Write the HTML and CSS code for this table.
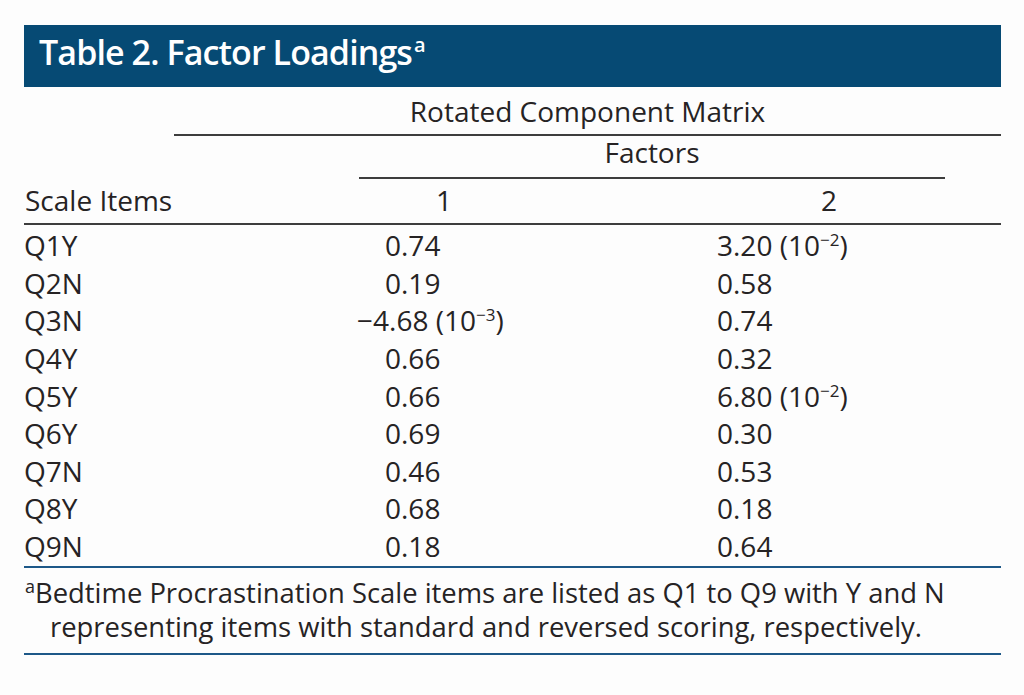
FILE: index.html
```html
<!DOCTYPE html>
<html lang="en">
<head>
<meta charset="utf-8">
<title>Table 2. Factor Loadings</title>
<link rel="stylesheet" href="styles.css">
</head>
<body>
<div class="table-wrap">
  <div class="title">Table 2. Factor Loadings<sup>a</sup></div>
  <div class="span-head rotated">Rotated Component Matrix</div>
  <div class="span-head factors">Factors</div>
  <div class="col-head">
    <div class="ch-label">Scale Items</div>
    <div class="ch-1">1</div>
    <div class="ch-2">2</div>
  </div>
  <div class="rows">
    <div class="lbl">Q1Y</div><div class="v1">0.74</div><div class="v2">3.20 (10<sup>−2</sup>)</div>
    <div class="lbl">Q2N</div><div class="v1">0.19</div><div class="v2">0.58</div>
    <div class="lbl">Q3N</div><div class="v1 hang">−4.68 (10<sup>−3</sup>)</div><div class="v2">0.74</div>
    <div class="lbl">Q4Y</div><div class="v1">0.66</div><div class="v2">0.32</div>
    <div class="lbl">Q5Y</div><div class="v1">0.66</div><div class="v2">6.80 (10<sup>−2</sup>)</div>
    <div class="lbl">Q6Y</div><div class="v1">0.69</div><div class="v2">0.30</div>
    <div class="lbl">Q7N</div><div class="v1">0.46</div><div class="v2">0.53</div>
    <div class="lbl">Q8Y</div><div class="v1">0.68</div><div class="v2">0.18</div>
    <div class="lbl">Q9N</div><div class="v1">0.18</div><div class="v2">0.64</div>
  </div>
  <div class="footnote"><sup>a</sup>Bedtime Procrastination Scale items are listed as Q1 to Q9 with Y and N representing items with standard and reversed scoring, respectively.</div>
</div>
</body>
</html>
```

FILE: styles.css
```css
html, body {
  margin: 0;
  padding: 0;
  background: #fdfdfd;
}

body {
  font-family: "Open Sans", "Noto Sans", "Liberation Sans", sans-serif;
  color: #262324;
  font-size: 28px;
}

.table-wrap {
  width: 977px;
  margin: 25px 0 0 24px;
}

.title {
  box-sizing: border-box;
  height: 62px;
  background: #064a74;
  color: #ffffff;
  font-weight: 600;
  font-size: 34px;
  letter-spacing: -0.9px;
  line-height: 40px;
  padding: 7px 0 0 15px;
}

.title sup {
  font-size: 20px;
  line-height: 0;
  vertical-align: 13px;
  margin-left: 2px;
  letter-spacing: 0;
}

.span-head {
  text-align: center;
  line-height: 30px;
  border-bottom: 2px solid #3d3d3d;
}

.rotated {
  margin-left: 150px;
  padding: 9px 0 8px;
}

.factors {
  margin: 0 56px 0 335px;
  padding: 1px 0 10px;
}

.col-head {
  display: grid;
  grid-template-columns: 335px 168px 1fr;
  line-height: 30px;
  padding: 6px 0 8px 1px;
  border-bottom: 2px solid #3d3d3d;
}

.ch-1 {
  text-align: center;
}

.ch-2 {
  text-align: right;
  padding-right: 164px;
}

.rows {
  display: grid;
  grid-template-columns: 361px 332px 1fr;
  grid-auto-rows: 24px;
  row-gap: 13.625px;
  line-height: 24px;
  padding: 8px 0 8px 0;
  border-bottom: 2px solid #1d5888;
}

.hang {
  margin-left: -28px;
}

.rows sup {
  font-size: 17px;
  line-height: 0;
  vertical-align: 10px;
}

.footnote {
  font-size: 27.4px;
  line-height: 34px;
  padding: 8px 0 9px 26px;
  text-indent: -25px;
  border-bottom: 2px solid #1d5888;
}

.footnote sup {
  font-size: 18px;
  line-height: 0;
  vertical-align: 10px;
}
```
